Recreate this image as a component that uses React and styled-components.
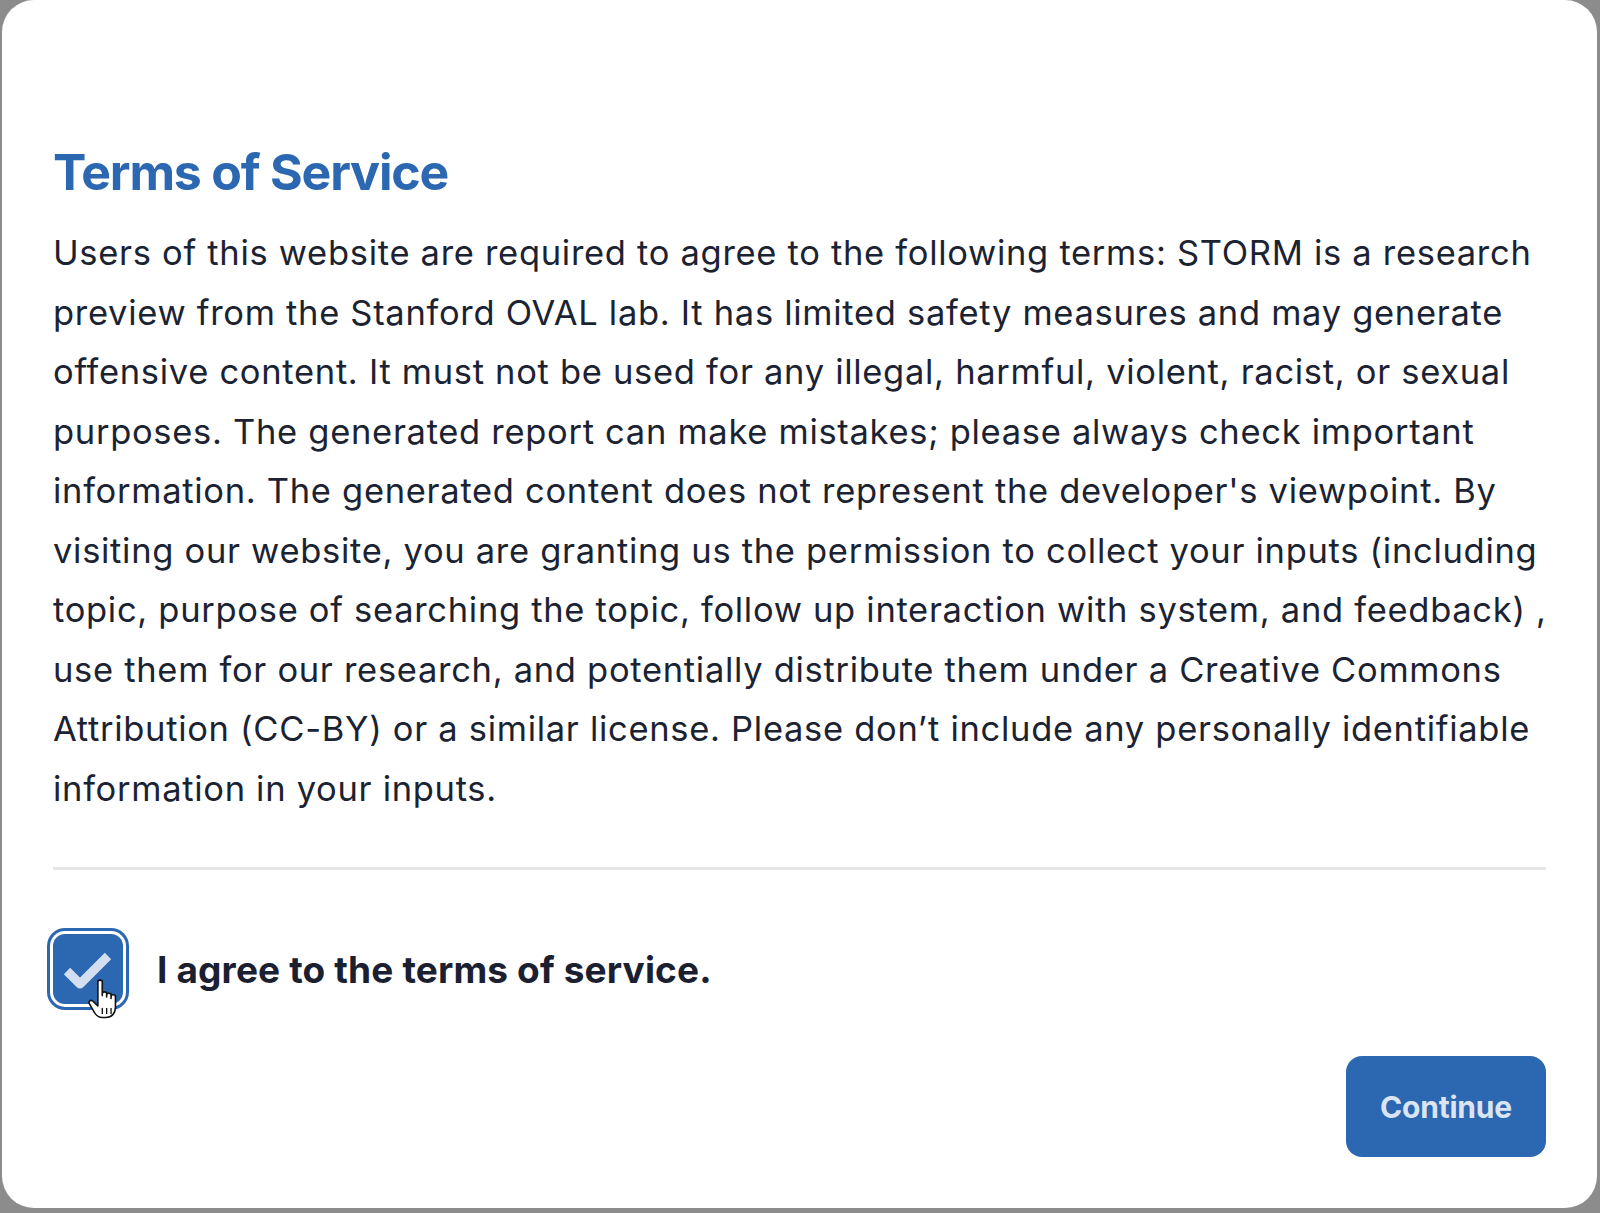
import React, { useState } from 'react'
import styled, { createGlobalStyle } from 'styled-components'

const GlobalStyle = createGlobalStyle`
  html, body {
    margin: 0;
    padding: 0;
    background: #8c8c8c;
  }
  body {
    font-family: Inter, "Noto Sans", "Liberation Sans", sans-serif;
    -webkit-font-smoothing: antialiased;
  }
`

const Backdrop = styled.div`
  width: 1600px;
  height: 1213px;
  padding: 0 3px 5px 2px;
  box-sizing: border-box;
`

const Modal = styled.section`
  height: 100%;
  box-sizing: border-box;
  background: #ffffff;
  border-radius: 32px;
  padding: 142px 51px 51px;
  display: flex;
  flex-direction: column;
`

const Title = styled.h2`
  margin: 0;
  font-size: 50px;
  line-height: 60px;
  font-weight: 700;
  letter-spacing: -1.2px;
  color: #2c67b1;
`

const Body = styled.p`
  margin: 21px 0 0;
  font-size: 34.5px;
  line-height: 59.5px;
  color: #1b2333;
  white-space: nowrap;
  letter-spacing: 0.7px;
`

const Divider = styled.hr`
  margin: 49px 0 0;
  border: 0;
  height: 3px;
  background: #e6e6e6;
`

const AgreeRow = styled.label`
  margin-top: 58px;
  display: flex;
  align-items: center;
  gap: 28px;
  cursor: pointer;
`

const Box = styled.span`
  position: relative;
  flex: none;
  width: 70px;
  height: 70px;
  margin: 6px 6px 6px 0;
  border-radius: 12px;
  background: ${p => (p.checked ? '#2c67b1' : '#ffffff')};
  box-shadow: 0 0 0 3px #ffffff, 0 0 0 6px #2c67b1;
  display: flex;
  align-items: center;
  justify-content: center;
`

const Cursor = styled.svg`
  position: absolute;
  left: 33px;
  top: 44px;
  width: 34px;
  height: 41px;
`

const AgreeText = styled.span`
  font-size: 37px;
  font-weight: 700;
  letter-spacing: 0.15px;
  color: #1a2030;
`

const Footer = styled.div`
  margin-top: auto;
  display: flex;
  justify-content: flex-end;
`

const Button = styled.button`
  width: 200px;
  height: 101px;
  border: 0;
  border-radius: 16px;
  background: #2c67b1;
  color: #dae4f3;
  font-family: inherit;
  font-size: 30px;
  font-weight: 700;
  letter-spacing: -0.2px;
  cursor: pointer;
`

const lines = [
  'Users of this website are required to agree to the following terms: STORM is a research',
  'preview from the Stanford OVAL lab. It has limited safety measures and may generate',
  'offensive content. It must not be used for any illegal, harmful, violent, racist, or sexual',
  'purposes. The generated report can make mistakes; please always check important',
  "information. The generated content does not represent the developer's viewpoint. By",
  'visiting our website, you are granting us the permission to collect your inputs (including',
  'topic, purpose of searching the topic, follow up interaction with system, and feedback) ,',
  'use them for our research, and potentially distribute them under a Creative Commons',
  'Attribution (CC-BY) or a similar license. Please don\u2019t include any personally identifiable',
  'information in your inputs.',
]

export default function App() {
  const [checked, setChecked] = useState(true)
  return (
    <>
      <GlobalStyle />
      <Backdrop>
        <Modal>
          <Title>Terms of Service</Title>
          <Body>
            {lines.map((l, i) => (
              <React.Fragment key={i}>
                {l}
                {i < lines.length - 1 && <br />}
              </React.Fragment>
            ))}
          </Body>
          <Divider />
          <AgreeRow onClick={() => setChecked(!checked)}>
            <Box checked={checked}>
              {checked && (
                <svg width="70" height="70" viewBox="0 0 70 70">
                  <polyline
                    points="14,37 27,50 55,22"
                    fill="none"
                    stroke="#d3dff0"
                    strokeWidth="9"
                    strokeLinejoin="round"
                  />
                </svg>
              )}
              <Cursor viewBox="0 0 21 28">
                <path
                  d="M7 2.5c0-1.4 3-1.4 3 0V12V10.5c0-1.4 3-1.4 3 0V13V11.5c0-1.4 3-1.4 3 0V14V12.5c0-1.4 3-1.4 3 0V20c0 4-2.5 7-6.5 7h-2.5c-2.5 0-4-1.3-5.2-3.2L1.2 17.5c-0.9-1.5 0.8-3 2.2-1.8L7 19z"
                  fill="#ffffff"
                  stroke="#111111"
                  strokeWidth="1.1"
                  strokeLinejoin="round"
                />
                <path d="M10 20.5v4M13 20.5v4M16 20.5v4" stroke="#111111" strokeWidth="0.9" />
              </Cursor>
            </Box>
            <AgreeText>I agree to the terms of service.</AgreeText>
          </AgreeRow>
          <Footer>
            <Button>Continue</Button>
          </Footer>
        </Modal>
      </Backdrop>
    </>
  )
}
